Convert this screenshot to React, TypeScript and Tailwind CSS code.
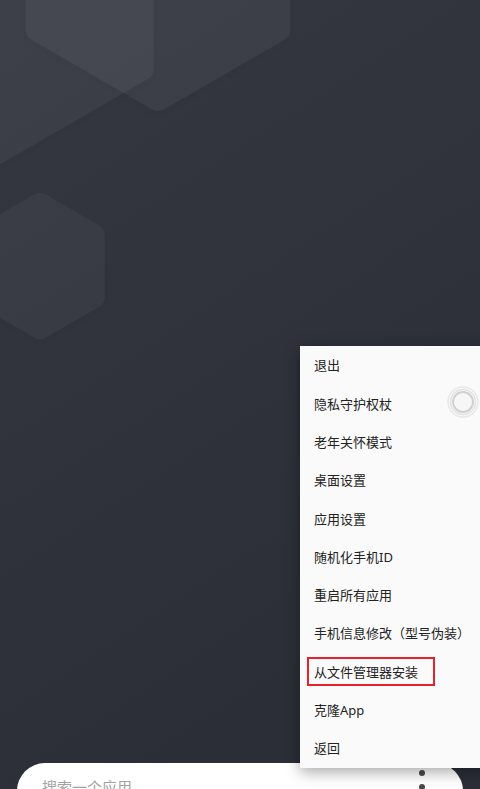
import type { ReactNode } from "react";

const MENU_ITEMS = [
  "退出",
  "隐私守护权杖",
  "老年关怀模式",
  "桌面设置",
  "应用设置",
  "随机化手机ID",
  "重启所有应用",
  "手机信息修改（型号伪装）",
  "从文件管理器安装",
  "克隆App",
  "返回",
];

// pointy-top hexagon points
function hex(cx: number, cy: number, r: number) {
  const pts: string[] = [];
  for (let i = 0; i < 6; i++) {
    const a = (Math.PI / 180) * (60 * i - 90);
    pts.push(`${(cx + r * Math.cos(a)).toFixed(1)},${(cy + r * Math.sin(a)).toFixed(1)}`);
  }
  return pts.join(" ");
}

function Hex({ cx, cy, r, op }: { cx: number; cy: number; r: number; op: number }) {
  return (
    <g opacity={op} filter="url(#sh)">
      <polygon
        points={hex(cx, cy, r)}
        fill="#ffffff"
        stroke="#ffffff"
        strokeWidth="22"
        strokeLinejoin="round"
      />
    </g>
  );
}

function Backdrop() {
  return (
    <svg className="absolute inset-0" width="480" height="789" viewBox="0 0 480 789">
      <defs>
        <linearGradient id="bg" x1="0" y1="0" x2="0.4" y2="1">
          <stop offset="0" stopColor="#353841" />
          <stop offset="1" stopColor="#2b2e36" />
        </linearGradient>
        <filter id="sh" x="-20%" y="-20%" width="140%" height="140%">
          <feDropShadow dx="0" dy="3" stdDeviation="3" floodColor="#000" floodOpacity="0.6" />
        </filter>
      </defs>
      <rect width="480" height="789" fill="url(#bg)" />
      <Hex cx={-27} cy={-29} r={196} op={0.04} />
      <Hex cx={158} cy={-40} r={140} op={0.045} />
      <Hex cx={40} cy={266} r={62} op={0.035} />
    </svg>
  );
}

function MenuRow({ children, boxed }: { children: ReactNode; boxed?: boolean }) {
  return (
    <li className="relative flex h-[38.3px] items-center pl-[14px] text-[13px] text-[#222]">
      {boxed && (
        <span className="absolute left-[7px] top-[4px] h-[29px] w-[128px] border-2 border-[#e3222b]" />
      )}
      <span className="relative">{children}</span>
    </li>
  );
}

export default function App() {
  return (
    <div
      className="relative h-[789px] w-[480px] overflow-hidden"
      style={{ fontFamily: '"Noto Sans", "Noto Sans CJK SC", sans-serif' }}
    >
      <Backdrop />

      <div className="relative flex h-full flex-col justify-end">
        <div className="mx-[17px] mb-[-30px] flex h-[56px] items-start justify-between rounded-[28px] bg-white pl-[25px] pr-[38px]">
          <span className="mt-[13px] text-[15px] text-[#a3a3a3]">搜索一个应用</span>
          <div className="mt-[7px] flex flex-col items-center gap-[8px]">
            <span className="h-[6px] w-[6px] rounded-full bg-[#4a4a4a]" />
            <span className="h-[6px] w-[6px] rounded-full bg-[#4a4a4a]" />
          </div>
        </div>
      </div>

      <div className="absolute left-[300px] top-[346px] w-[190px] bg-[#fafafa] shadow-[0_4px_14px_rgba(0,0,0,0.35)]">
        <ul className="pt-[1px]">
          {MENU_ITEMS.map((t) => (
            <MenuRow key={t} boxed={t === "从文件管理器安装"}>
              {t}
            </MenuRow>
          ))}
        </ul>
        <svg className="absolute left-[145px] top-[38px]" width="36" height="36" viewBox="0 0 36 36">
          <circle cx="18" cy="18" r="15" fill="none" stroke="#e8e8e8" strokeWidth="1.5" />
          <circle cx="18" cy="18" r="12.5" fill="none" stroke="#e2e2e2" strokeWidth="1.5" />
          <circle cx="18" cy="18" r="10" fill="#f6f6f6" stroke="#d0d0d0" strokeWidth="2" />
        </svg>
      </div>
    </div>
  );
}
